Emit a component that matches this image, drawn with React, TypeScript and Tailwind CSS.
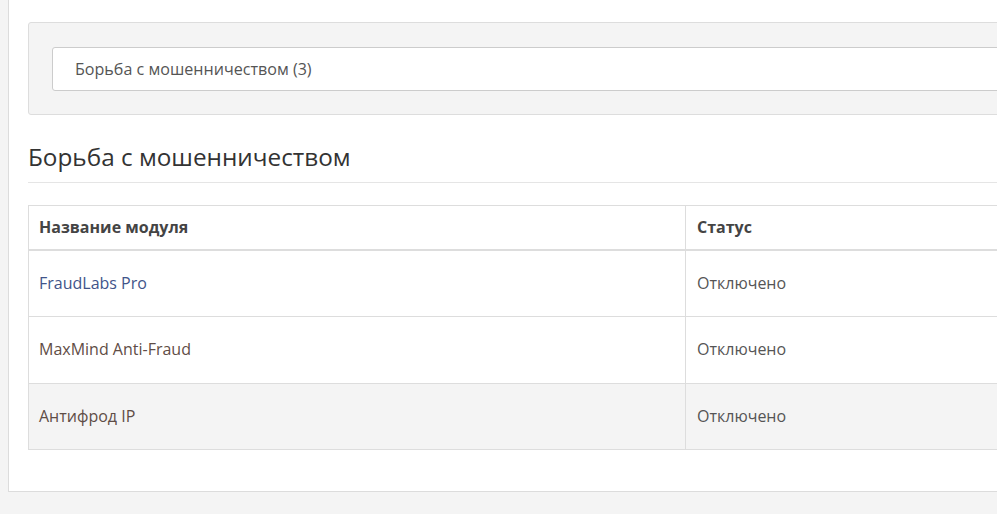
import React from "react";

const rows = [
  { name: "FraudLabs Pro", color: "text-[#41548a]", status: "Отключено", bg: "bg-white" },
  { name: "MaxMind Anti-Fraud", color: "text-[#5f4d46]", status: "Отключено", bg: "bg-white" },
  { name: "Антифрод IP", color: "text-[#5f4d46]", status: "Отключено", bg: "bg-[#f4f4f4]" },
];

export default function App() {
  return (
    <div
      className="w-[997px] h-[514px] overflow-hidden bg-[#f4f4f4] pl-2"
      style={{ fontFamily: '"Open Sans", "Liberation Sans", sans-serif' }}
    >
      <div className="w-[1100px] bg-white border-l border-r border-b border-[#dcdcdc] pl-[19px] pr-4 pt-[22px] pb-[41px]">
        <div className="bg-[#f4f4f4] border border-[#dddddd] rounded-[3px] pl-[23px] pr-6 pt-6 pb-[23px]">
          <div className="h-[44px] bg-white border border-[#cccccc] rounded-[3px] flex items-center pl-[22px] text-[16.1px] text-[#555]">
            Борьба с мошенничеством (3)
          </div>
        </div>

        <h2 className="mt-[25px] text-[24.3px] leading-[33px] text-[#333] pb-[9px] border-b border-[#e5e5e5]">
          Борьба с мошенничеством
        </h2>

        <table className="mt-[22px] w-full border-collapse border border-[#dddddd] text-[16px] leading-[23px]">
          <thead>
            <tr>
              <th className="w-[657px] text-left font-bold text-[#444] px-[10px] py-[10px] border border-[#dddddd] border-b-2">
                Название модуля
              </th>
              <th className="text-left font-bold text-[#444] pl-[11px] pr-[10px] py-[10px] border border-[#dddddd] border-b-2">
                Статус
              </th>
            </tr>
          </thead>
          <tbody>
            {rows.map((r) => (
              <tr key={r.name} className={r.bg}>
                <td className={`px-[10px] py-[21.17px] border border-[#dddddd] ${r.color}`}>{r.name}</td>
                <td className="pl-[11px] pr-[10px] py-[21.17px] border border-[#dddddd] text-[#555]">{r.status}</td>
              </tr>
            ))}
          </tbody>
        </table>
      </div>
    </div>
  );
}
